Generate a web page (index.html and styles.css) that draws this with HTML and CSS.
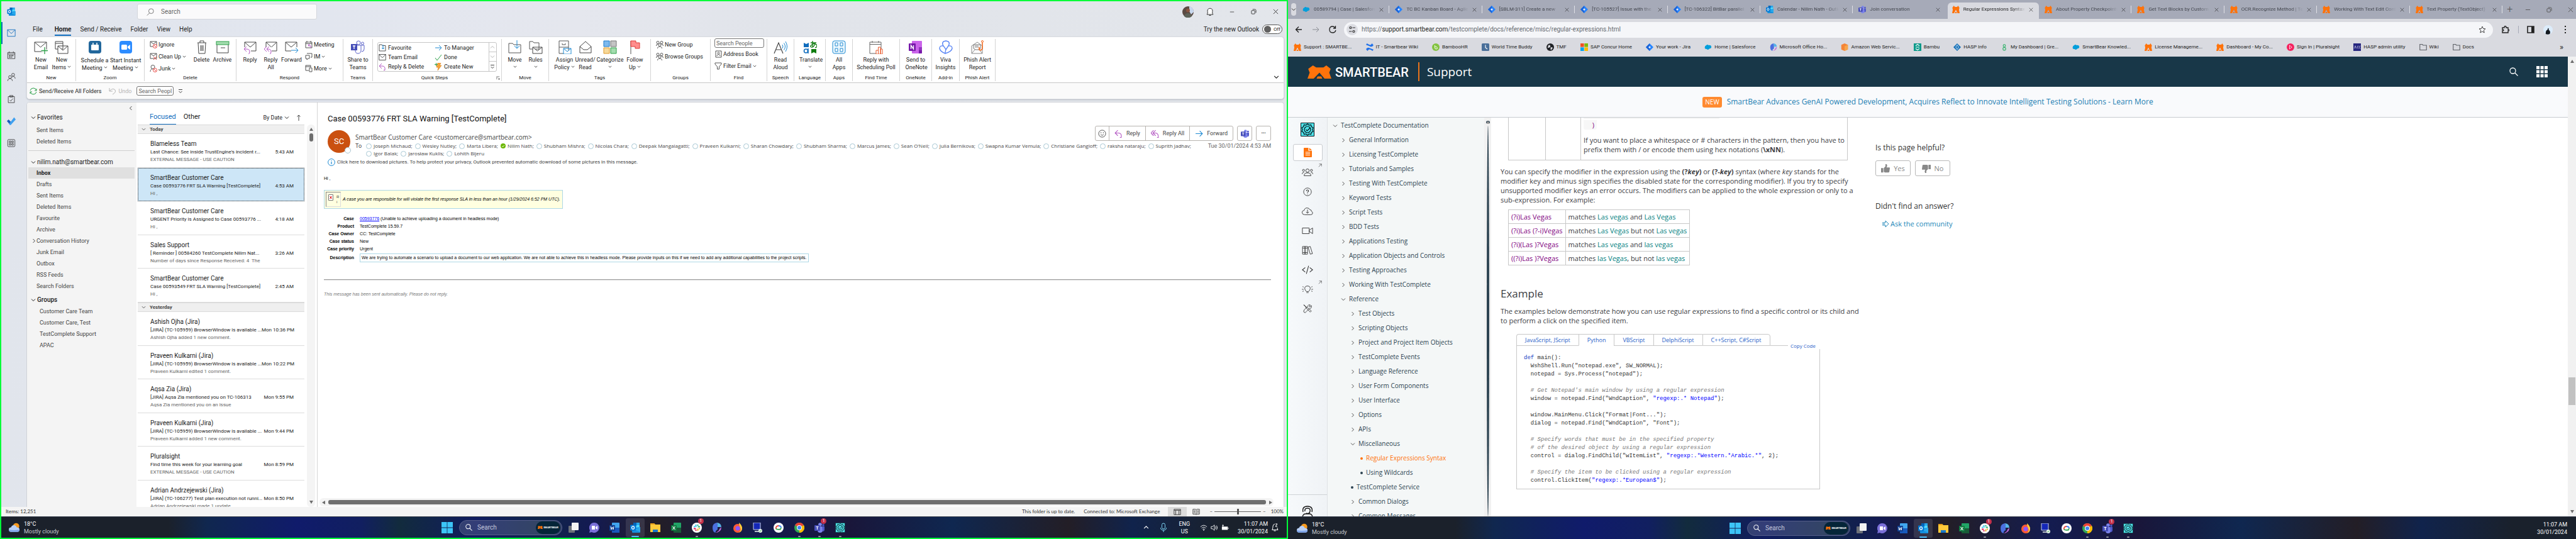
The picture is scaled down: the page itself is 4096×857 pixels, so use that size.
FILE: index.html
```html
<!DOCTYPE html>
<html lang="en">
<head>
<meta charset="utf-8">
<title>Desktop</title>
<link rel="stylesheet" href="styles.css">
</head>
<body>
<svg class="defs" aria-hidden="true">
  <symbol id="mail" viewBox="0 0 16 14"><path d="M1 1h14v12H1z M1 1l7 7 7-7" fill="none" stroke="currentColor"/></symbol>
  <symbol id="cal" viewBox="0 0 16 16"><path d="M1 3h14v12H1z M1 6h14 M4 1v3 M12 1v3" fill="none" stroke="currentColor"/><path d="M3.500 9h9.500M3.500 12h6.500" stroke="currentColor" stroke-width="2" stroke-dasharray="2 1"/></symbol>
  <symbol id="people" viewBox="0 0 16 16"><circle cx="5.500" cy="8" r="2.800" fill="none" stroke="currentColor"/><circle cx="11.500" cy="3.500" r="2.800" fill="none" stroke="currentColor"/><path d="M1 15.500c0-6 9-6 9 0M8.500 9c3-4 7-2 7 2" fill="none" stroke="currentColor"/></symbol>
  <symbol id="clip" viewBox="0 0 14 16"><path d="M1 3h12v12H1z M4 1h6v3H4z M4 10l2 2 4-5" fill="none" stroke="currentColor"/></symbol>
  <symbol id="todo" viewBox="0 0 16 14"><path d="M0 7l3-3 4 4-2 5z" fill="#185abd"/><path d="M4 12L13 0l3 4-9 10H5z" fill="#3fa0ef"/></symbol>
  <symbol id="apps" viewBox="0 0 16 16"><rect x="1" y="1" width="14" height="14" rx="2" fill="none" stroke="currentColor"/><path d="M4 4h3v3H4zM9 4h3v3H9zM4 9h3v3H4zM9 9h3v3H9z" fill="none" stroke="currentColor"/></symbol>
  <symbol id="outlook" viewBox="0 0 16 16"><path d="M5 0h10v8H5z" fill="#28a8ea"/><path d="M5 0h5v5H5z" fill="#0364b8"/><path d="M10 4h5v4h-5z" fill="#50d9ff"/><path d="M3 9l13-2v8q0 1-1 1H4q-1 0-1-1z" fill="#1490df"/><path d="M16 7v8l-9-4z" fill="#28a8ea"/><rect y="3.500" width="9" height="9" rx="1" fill="#0078d4"/><ellipse cx="4.500" cy="8" rx="2" ry="2.300" fill="none" stroke="#fff" stroke-width="1.300"/></symbol>
  <symbol id="lens" viewBox="0 0 14 14"><circle cx="8.500" cy="5.500" r="4.500" fill="none" stroke="currentColor"/><path d="M5.500 9L1 13.500" stroke="currentColor"/></symbol>
  <symbol id="lens2" viewBox="0 0 14 14"><circle cx="5.500" cy="5.500" r="4.500" fill="none" stroke="currentColor" stroke-width="1.300"/><path d="M9 9l4.500 4.500" stroke="currentColor" stroke-width="1.300"/></symbol>
  <symbol id="dn" viewBox="0 0 8 8"><path d="M1 2.500l3 3 3-3" fill="none" stroke="currentColor"/></symbol>
  <symbol id="rt" viewBox="0 0 8 8"><path d="M2.500 1l3 3-3 3" fill="none" stroke="currentColor"/></symbol>
  <symbol id="lt" viewBox="0 0 8 8"><path d="M5.500 1l-3 3 3 3" fill="none" stroke="currentColor"/></symbol>
  <symbol id="up" viewBox="0 0 8 8"><path d="M1 5.500l3-3 3 3" fill="none" stroke="currentColor"/></symbol>
  <symbol id="x" viewBox="0 0 10 10"><path d="M1 1l8 8M9 1l-8 8" stroke="currentColor" fill="none"/></symbol>
  <symbol id="min" viewBox="0 0 10 10"><path d="M1 5h8" stroke="currentColor"/></symbol>
  <symbol id="rest" viewBox="0 0 10 10"><rect x="1" y="3" width="6" height="6" rx="1" fill="none" stroke="currentColor"/><path d="M3 1h4q2 0 2 2v4" fill="none" stroke="currentColor"/></symbol>
  <symbol id="bell" viewBox="0 0 14 14"><path d="M2 11c2-2 1-4 1-6 0-5 8-5 8 0 0 2-1 4 1 6z" fill="#fff" stroke="currentColor"/><path d="M5.500 12.500h3" stroke="currentColor"/></symbol>
  <symbol id="newmail" viewBox="0 0 22 22"><path d="M1 3h19v15H1z M1 3l9.500 8L20 3" fill="#fff" stroke="#444"/><path d="M17 11v11M12 16.500h10" stroke="#fff" stroke-width="4"/><path d="M17 11v11M11.500 16.500h11" stroke="#2ea04a" stroke-width="1.300"/></symbol>
  <symbol id="items" viewBox="0 0 22 22"><path d="M1 2h12v12H1z M1 5h12" fill="#fff" stroke="#444"/><path d="M5 9h16v12H5z M5 9l8 7 8-7" fill="#fff" stroke="#444"/></symbol>
  <symbol id="zcal" viewBox="0 0 22 22"><rect x="1" y="1" width="20" height="20" rx="4" fill="#22679c"/><rect x="5" y="7" width="12" height="9" rx="1" fill="#fff"/><path d="M8 4v3M14 4v3" stroke="#fff" stroke-width="1.500"/></symbol>
  <symbol id="zcam" viewBox="0 0 22 22"><rect x="1" y="1" width="20" height="20" rx="4" fill="#2d8cff"/><rect x="4" y="7" width="9" height="8" rx="1.500" fill="#fff"/><path d="M14 10l4-3v8l-4-3z" fill="#fff"/></symbol>
  <symbol id="ignore" viewBox="0 0 12 12"><path d="M1 1h10v8H1z M1 1l5 4 5-4" fill="none" stroke="#555"/><circle cx="8.500" cy="8.500" r="3" fill="#fff" stroke="#e8413c"/><path d="M6.500 6.500l4 4" stroke="#e8413c"/></symbol>
  <symbol id="clean" viewBox="0 0 12 12"><path d="M1 1h10v8H1z M1 1l5 4 5-4" fill="none" stroke="#555"/><path d="M6 6l5 5M11 6l-5 5" stroke="#e8413c"/></symbol>
  <symbol id="junk" viewBox="0 0 12 12"><circle cx="5" cy="3.500" r="3" fill="none" stroke="#555"/><path d="M1 11c0-4 3-5 5-4" fill="none" stroke="#555"/><circle cx="8.500" cy="8.500" r="3" fill="#fff" stroke="#e8413c"/><path d="M6.500 6.500l4 4" stroke="#e8413c"/></symbol>
  <symbol id="trash" viewBox="0 0 22 22"><path d="M4 4h14M8 4V1h6v3M5 4l1 17h10l1-17M9 8v9M11 8v9M13 8v9" fill="none" stroke="#444"/></symbol>
  <symbol id="archive" viewBox="0 0 22 22"><path d="M2 6h18v14H2z" fill="#fff" stroke="#444"/><rect x="1" y="2" width="20" height="5" fill="#a3dcae" stroke="#2ea04a"/><path d="M8 12h7" stroke="#444"/></symbol>
  <symbol id="breply" viewBox="0 0 22 22"><path d="M2 3h18v14H2z M2 3l9 8 9-8" fill="#fff" stroke="#444"/><path d="M0 11h12v11H0z" fill="#fff"/><path d="M5 10l-4 4 4 4M1 14h4q5 0 5 4t-2 4" fill="none" stroke="#b254c2"/></symbol>
  <symbol id="breplyall" viewBox="0 0 22 22"><path d="M3 3h17v14H3z M3 3l8.500 8L20 3" fill="#fff" stroke="#444"/><path d="M0 11h12v11H0z" fill="#fff"/><path d="M4 10l-4 4 4 4M8 10l-4 4 4 4M4 14h2q5 0 5 4t-2 4" fill="none" stroke="#b254c2"/></symbol>
  <symbol id="bfwd" viewBox="0 0 22 22"><path d="M1 3h18v14H1z M1 3l9 8 9-8" fill="#fff" stroke="#444"/><path d="M10 11h12v11H10z" fill="#fff"/><path d="M10 16h11M17 12l4 4-4 4" fill="none" stroke="#1f8ad2"/></symbol>
  <symbol id="meet" viewBox="0 0 12 12"><path d="M1 2h10v9H1z M1 4.500h10M3 0v3M9 0v3" fill="none" stroke="#555"/><path d="M7 5L5 7l2 2M5 7h2q3 0 2 4" fill="none" stroke="#b254c2"/></symbol>
  <symbol id="im" viewBox="0 0 12 12"><path d="M3 1h8v6H9M1 4h6v5H5l-2 2V9H1z" fill="none" stroke="#555"/></symbol>
  <symbol id="more" viewBox="0 0 12 12"><path d="M1 1h8v3M1 3h8M1 1v8h5M7 5h4v6H7z" fill="none" stroke="#555"/></symbol>
  <symbol id="teams" viewBox="0 0 22 22"><circle cx="12" cy="4" r="3" fill="#fff" stroke="#5b62c8"/><circle cx="18.500" cy="5" r="2" fill="#fff" stroke="#5b62c8"/><path d="M8 8h8v8q0 5-5 5-4 0-4-5zM16 8h5v6q0 4-4 4" fill="#fff" stroke="#5b62c8"/><rect x="0" y="6" width="10" height="10" fill="#464eb8"/><path d="M3 9h4M5 9v5" stroke="#fff" stroke-width="1.300"/></symbol>
  <symbol id="teamsf" viewBox="0 0 16 16"><circle cx="9" cy="3" r="2.800" fill="#7b83eb"/><circle cx="14" cy="4" r="1.800" fill="#5059c9"/><path d="M5 6h8v6q0 4-4 4t-4-4z" fill="#7b83eb"/><path d="M12 6h4v5q0 3-3 3z" fill="#5059c9"/><rect y="4" width="9" height="9" rx="1" fill="#464eb8"/><path d="M2.500 6.500h4M4.500 6.500v4.500" stroke="#fff" stroke-width="1.200"/></symbol>
  <symbol id="fav" viewBox="0 0 12 12"><path d="M1 1h4l1 1.500h5V11H1z" fill="none" stroke="#555"/><path d="M7 1v7M5 6l2 2 2-2" fill="none" stroke="#1f8ad2"/></symbol>
  <symbol id="reply" viewBox="0 0 12 12"><path d="M5 1L1 5l4 4M1 5h5q5 0 4 6.500H8" fill="none" stroke="#b254c2"/></symbol>
  <symbol id="replyall" viewBox="0 0 12 12"><path d="M4 1L0 5l4 4M7 1L3 5l4 4M3 5h4q4 0 4 6.500H9" fill="none" stroke="#b254c2"/></symbol>
  <symbol id="arrow" viewBox="0 0 12 12"><path d="M1 6h10M7 2l4 4-4 4" fill="none" stroke="currentColor"/></symbol>
  <symbol id="check" viewBox="0 0 12 12"><path d="M1 7l3 4 7-9" fill="none" stroke="#2ea04a"/></symbol>
  <symbol id="bolt" viewBox="0 0 12 12"><path d="M5 0h5L8 4h3l-6 8 1-5H3z" fill="#f7a63a" stroke="#d9831f" stroke-width=".7"/><path d="M2.500 0v5M0 2.500h5" stroke="#2ea04a"/></symbol>
  <symbol id="move" viewBox="0 0 22 22"><path d="M1 5h6l2 2h11v13H1z" fill="#fff" stroke="#555"/><path d="M14 0v13M10 9l4 4 4-4" fill="none" stroke="#1f8ad2"/></symbol>
  <symbol id="rules" viewBox="0 0 22 22"><path d="M1 2h5l2 2h8v10H1z" fill="#fff" stroke="#555"/><path d="M6 11h15v10H6z M6 11l7.500 6 7.500-6" fill="#fff" stroke="#444"/></symbol>
  <symbol id="assign" viewBox="0 0 22 22"><path d="M2 1h15v20H2z M2 11h15M7 5v2h5V5" fill="#fff" stroke="#555"/><path d="M9 13h12v9H9z M9 13l6 5 6-5" fill="#fff" stroke="#1f8ad2"/></symbol>
  <symbol id="unread" viewBox="0 0 22 22"><path d="M2 10l9-8 9 8v10H2z M2 10l6 5h6l6-5" fill="#fff" stroke="#444"/></symbol>
  <symbol id="categ" viewBox="0 0 22 22"><path d="M1 1h9v9H1z" fill="#7db9ee" stroke="#1f78c8"/><path d="M12 1h9v9h-9z" fill="#c4c4c4" stroke="#777"/><path d="M1 12h9v9H1z" fill="#f7d99a" stroke="#e09a2b"/><path d="M12 12h9v9h-9z" fill="#a3dcae" stroke="#2ea04a"/></symbol>
  <symbol id="flag" viewBox="0 0 22 22"><path d="M4 1v21" stroke="#555"/><path d="M4 1h8v3h6v9h-7v-3H4z" fill="#ff8d8d" stroke="#dd3c38"/></symbol>
  <symbol id="grp" viewBox="0 0 12 12"><circle cx="3" cy="2.500" r="2" fill="none" stroke="#555"/><circle cx="9" cy="2.500" r="2" fill="none" stroke="#555"/><circle cx="6" cy="6.500" r="2" fill="none" stroke="#555"/><path d="M2.500 12c0-4 7-4 7 0M.500 8q0-3 3-3M11.500 8q0-3-3-3" fill="none" stroke="#555"/></symbol>
  <symbol id="abook" viewBox="0 0 12 12"><path d="M2 1h9v10H2z" fill="none" stroke="#555"/><circle cx="6.500" cy="4.500" r="1.500" fill="none" stroke="#555"/><path d="M4 9c0-3 5-3 5 0" fill="none" stroke="#555"/></symbol>
  <symbol id="filter" viewBox="0 0 12 12"><path d="M1 1h10v2L7.500 7v4h-3V7L1 3z" fill="none" stroke="#555"/></symbol>
  <symbol id="read" viewBox="0 0 22 22"><path d="M1 21L8 4l7 17M3.500 15h9" fill="none" stroke="#444" stroke-width="1.200"/><path d="M14 7q2 3 0 6M16.500 4.500q4 5.500 0 11M19 2q5 8 0 16" fill="none" stroke="#1f8ad2"/></symbol>
  <symbol id="trans" viewBox="0 0 22 22"><path d="M1 4l4 2 4-2v7H1z" fill="#0f6cbd"/><circle cx="4.500" cy="17" r="3" fill="none" stroke="#0f6cbd" stroke-width="1.600"/><path d="M8 13v8" stroke="#0f6cbd" stroke-width="1.600"/><path d="M12 4h9M15 1v9M19 6q-3 6-6 5t1-4 7 0-2 5" fill="none" stroke="#107c10" stroke-width="1.300"/><path d="M13 14h8v7l-4-2-4 2z" fill="#107c10"/></symbol>
  <symbol id="allapps" viewBox="0 0 22 22"><rect x="1" y="1" width="20" height="20" rx="3" fill="#eaf6fd" stroke="#1f8ad2"/><path d="M5 4h4v5H5zM13 4h4v5h-4zM5 13h4v5H5zM13 13h4v5h-4z" fill="#fff" stroke="#1f8ad2"/></symbol>
  <symbol id="poll" viewBox="0 0 22 22"><path d="M1 3h18v18H1z M1 6.500h18M5 1v3M15 1v3" fill="#fff" stroke="#666"/><path d="M11 16h3.500v6H11zM14.500 11H18v11h-3.500zM18 14h3v8h-3z" fill="#fff" stroke="#e8582b"/></symbol>
  <symbol id="onenote" viewBox="0 0 22 22"><rect x="5" y="1" width="16" height="20" rx="1" fill="#ca64ea"/><path d="M16 11h5v5h-5z" fill="#9332bf"/><path d="M16 16h5v4q0 1-1 1h-4z" fill="#7719aa"/><rect y="5" width="11" height="12" rx="1" fill="#7719aa"/><path d="M3.500 14V8l4 6V8" fill="none" stroke="#fff" stroke-width="1.400"/></symbol>
  <symbol id="viva" viewBox="0 0 22 22"><path d="M7 9Q3 2 11 1q8 1 4 8l-4 6q-2-4-4-6zM7 9q-6-1-6 4 1 5 9 8M15 9q6-1 6 4-1 5-11 8 0-4 1-6" fill="none" stroke="#5a86f5" stroke-width="1.400"/></symbol>
  <symbol id="phish" viewBox="0 0 22 22"><path d="M2 9l9-6 8 6v12H2z M2 21l6-7h5l6 7" fill="#fff" stroke="#888"/><path d="M5 7h11v6l-3 2H8l-3-2z" fill="#fff" stroke="#777"/><path d="M7 9h6M7 11h6" stroke="#888"/><path d="M19 4v9q-1 4-5 2v-4" fill="none" stroke="#f26b21" stroke-width="1.600"/><circle cx="19" cy="2" r="1.500" fill="none" stroke="#f26b21"/></symbol>
  <symbol id="sync" viewBox="0 0 12 12"><path d="M1 5q1-4 5-4t5 4M11 2v3H8M11 7q-1 4-5 4T1 7M1 10V7h3" fill="none" stroke="#2ea04a"/></symbol>
  <symbol id="undo" viewBox="0 0 12 12"><path d="M1 1v5h5M1 6q5-6 9-2 2 4-4 7" fill="none" stroke="#b5b5b5"/></symbol>
  <symbol id="over" viewBox="0 0 8 8"><path d="M1 1.500h6M1.500 4L4 6.500 6.500 4" fill="none" stroke="#444"/></symbol>
  <symbol id="launch" viewBox="0 0 8 8"><path d="M1 7V1h6M3 3l4 4M7 4v3H4" fill="none" stroke="#444" stroke-width=".8"/></symbol>
  <symbol id="smile" viewBox="0 0 14 14"><circle cx="7" cy="7" r="6" fill="none" stroke="#444"/><path d="M4.500 8.500q2.500 3 5 0" fill="none" stroke="#444"/><circle cx="5" cy="5.500" r=".8" fill="#444"/><circle cx="9" cy="5.500" r=".8" fill="#444"/></symbol>
  <symbol id="info" viewBox="0 0 12 12"><circle cx="6" cy="6" r="5.400" fill="none" stroke="#1f8ad2"/><path d="M6 5v4M6 3v1" stroke="#1f8ad2" stroke-width="1.200"/></symbol>
  <symbol id="okdot" viewBox="0 0 8 8"><circle cx="4" cy="4" r="4" fill="#6bb700"/><path d="M2 4l1.500 1.500L6 3" fill="none" stroke="#fff"/></symbol>
  <symbol id="bear" viewBox="0 0 66 107" preserveAspectRatio="none"><path d="M2 28L15 0l9 17h20L52 0l12 28-4 30 6 49H47L33 58 17 107H0l6-49z" fill="#ff730b"/><path d="M28 89h10l3 18H25z" fill="#ff730b"/></symbol>
  <symbol id="sf" viewBox="0 0 16 12"><path d="M4 2q3-3 5 0 5-1 6 3 0 4-4 4-3 4-6 1Q0 10 1 6q0-3 3-4z" fill="#009edb"/></symbol>
  <symbol id="jira" viewBox="0 0 16 16"><path d="M8 0l8 8-8 8-8-8z" fill="#2684ff"/><path d="M8 0v5L5 8l3 3v5L0 8z" fill="#1b63d6"/><path d="M8 5.500L10.500 8 8 10.500 5.500 8z" fill="#e8edf7"/></symbol>
  <symbol id="conf" viewBox="0 0 16 16"><path d="M0 12q4-5 8-2l8 3-2 3q-6-4-8-3l-3 3zM16 4q-4 5-8 2L0 3l2-3q6 4 8 3l3-3z" fill="#2071ea"/></symbol>
  <symbol id="bamboo" viewBox="0 0 16 16"><circle cx="8" cy="8" r="8" fill="#83c341"/><path d="M6 4v5q0 3 3 3t2-3-4-2" fill="none" stroke="#fff" stroke-width="1.300"/></symbol>
  <symbol id="wtb" viewBox="0 0 16 16"><rect width="16" height="16" rx="2" fill="#4a6f99"/><path d="M8 3v6l4 3" fill="none" stroke="#fff" stroke-width="1.500"/></symbol>
  <symbol id="globe" viewBox="0 0 16 16"><circle cx="8" cy="8" r="8" fill="#202226"/><path d="M4 4q3-2 4 1T5 9 3 8M9 8q5 0 4 2l-3 4q-2 0-1-6" fill="#d9dae0"/></symbol>
  <symbol id="ms" viewBox="0 0 16 16"><path d="M0 0h7.500v7.500H0z" fill="#f25022"/><path d="M8.500 0H16v7.500H8.500z" fill="#7fba00"/><path d="M0 8.500h7.500V16H0z" fill="#00a4ef"/><path d="M8.500 8.500H16V16H8.500z" fill="#ffb900"/></symbol>
  <symbol id="m365" viewBox="0 0 16 16"><path d="M8 0q-7 1-7 8t5 8q-1-3 3-5V4z" fill="#4b6fe0"/><path d="M8 0q7 1 7 7H9V4z" fill="#56b4e8"/><path d="M15 7q0 8-9 9 6-3 6-6z" fill="#c268d8"/></symbol>
  <symbol id="aws" viewBox="0 0 16 16"><path d="M8 0l7 3v10l-7 3-7-3V3z" fill="#f58536"/><path d="M8 16l7-3V3L8 6z" fill="#f7a64a"/></symbol>
  <symbol id="bambu" viewBox="0 0 16 16"><path d="M0 0h16v16H0z" fill="#0b9a8a"/><path d="M4 5l4-3 4 3M4 11l4 3 4-3M4 8h8" fill="none" stroke="#fff" stroke-width="1.500"/></symbol>
  <symbol id="hasp" viewBox="0 0 16 16"><path d="M8 0l8 8-8 8-8-8z" fill="#1571b8"/><path d="M8 3l3 5-3 5-3-5z" fill="none" stroke="#fff"/></symbol>
  <symbol id="green" viewBox="0 0 16 16"><circle cx="8" cy="5" r="2.500" fill="none" stroke="#3cb371" stroke-width="1.500"/><circle cx="8" cy="11.500" r="3" fill="none" stroke="#3cb371" stroke-width="1.500"/></symbol>
  <symbol id="plural" viewBox="0 0 16 16"><circle cx="8" cy="8" r="8" fill="#f5225f"/><path d="M6 4v8l5-4z" fill="none" stroke="#fff"/></symbol>
  <symbol id="acc" viewBox="0 0 16 16"><path d="M0 0h16v16H0z" fill="#26267f"/><path d="M2 11l2-6 2 6M11 5.500q-3 0-3 2.500t3 2.500M15 5.500q-3 0-3 2.500t3 2.500" fill="none" stroke="#c9cbe8"/></symbol>
  <symbol id="fold" viewBox="0 0 16 16"><path d="M1 2h5l2 2h7v10H1z" fill="none" stroke="#5f6368" stroke-width="1.500"/></symbol>
  <symbol id="back" viewBox="0 0 12 12"><path d="M11 6H1.500M6 1.500L1.500 6 6 10.500" fill="none" stroke="currentColor" stroke-width="1.300"/></symbol>
  <symbol id="reload" viewBox="0 0 12 12"><path d="M10 3Q8 1 6 1 1 1 1 6t5 5q4 0 5-4M10.500 0v4H7" fill="none" stroke="currentColor" stroke-width="1.300"/></symbol>
  <symbol id="tune" viewBox="0 0 12 12"><circle cx="3.500" cy="3" r="1.500" fill="none" stroke="#333" stroke-width="1.200"/><circle cx="8.500" cy="9" r="1.500" fill="none" stroke="#333" stroke-width="1.200"/><path d="M6.500 3H11M1 9h4.500" stroke="#333" stroke-width="1.200"/></symbol>
  <symbol id="star" viewBox="0 0 12 12"><path d="M6 1l1.500 3.500 3.500.300-2.700 2.400.9 3.800L6 9l-3.200 2 .9-3.800L1 4.800l3.500-.300z" fill="none" stroke="#444"/></symbol>
  <symbol id="ext" viewBox="0 0 12 12"><path d="M1 3h3q0-2.500 1.500-2.500T7 3h3v3q2 0 2 1t-2 1v3H1V8q2 0 2-1T1 6z" fill="none" stroke="#222" stroke-width="1.400"/></symbol>
  <symbol id="panel" viewBox="0 0 12 12"><path d="M1 1h10v10H1z" fill="none" stroke="#222" stroke-width="1.600"/><path d="M7 1h4v10H7z" fill="#222"/></symbol>
  <symbol id="dots" viewBox="0 0 12 12"><path d="M5 0h2v2H5zM5 5h2v2H5zM5 10h2v2H5z" fill="#222"/></symbol>
  <symbol id="grid9" viewBox="0 0 18 18"><path d="M0 0h5v5H0zM6.500 0h5v5h-5zM13 0h5v5h-5zM0 6.500h5v5H0zM6.500 6.500h5v5h-5zM13 6.500h5v5h-5zM0 13h5v5H0zM6.500 13h5v5h-5zM13 13h5v5h-5z" fill="#fff"/></symbol>
  <symbol id="tc" viewBox="0 0 22 22"><path d="M.500.500h21v21H.500z" fill="#4fe3ea" stroke="#06121a"/><path d="M11 2l2.500 2 3-.500.800 3 2.700 1.500-1 3 1 3-2.700 1.500-.800 3-3-.500L11 20l-2.500-2-3 .500-.800-3L2 14l1-3-1-3 2.700-1.500.800-3 3 .500z" fill="none" stroke="#06121a" stroke-width="1.200"/><circle cx="11" cy="11" r="5" fill="none" stroke="#06121a" stroke-width="1.200"/><path d="M8.500 11l2 2 4.500-4.500" fill="none" stroke="#06121a" stroke-width="1.200"/></symbol>
  <symbol id="doc" viewBox="0 0 14 16"><path d="M0 1q0-1 1-1h7v5h6v10q0 1-1 1H1q-1 0-1-1z" fill="#ff730b"/><path d="M9.500 0L14 4H9.500z" fill="#ff730b"/><path d="M3 7.500h8M3 10h8M3 12.500h8" stroke="#fff"/></symbol>
  <symbol id="community" viewBox="0 0 20 14"><circle cx="10" cy="4" r="3" fill="none" stroke="currentColor"/><circle cx="3" cy="3.500" r="1.800" fill="none" stroke="currentColor"/><circle cx="17" cy="3.500" r="1.800" fill="none" stroke="currentColor"/><path d="M4 13q0-5 6-5t6 5zM.500 10q0-3 3.500-3M19.500 10q0-3-3.500-3" fill="none" stroke="currentColor"/></symbol>
  <symbol id="help" viewBox="0 0 16 16"><circle cx="8" cy="8" r="7" fill="none" stroke="currentColor"/><path d="M6 6.500q0-2 2-2t2 2q0 1-2 2v1M8 11v1.200" fill="none" stroke="currentColor" stroke-width="1.200"/></symbol>
  <symbol id="cloud" viewBox="0 0 20 14"><path d="M5 13q-4 0-4.500-3.500T4 5.500Q5 1 9 1t5 3q3 0 3 3 2.500 1 2 3.500T16 13z" fill="none" stroke="currentColor"/><path d="M10 4v6M7.500 8l2.500 2.500L12.500 8" fill="none" stroke="currentColor"/></symbol>
  <symbol id="video" viewBox="0 0 20 14"><path d="M1 2h12v10H1zM13 6l6-4v10l-6-4z" fill="none" stroke="currentColor"/></symbol>
  <symbol id="books" viewBox="0 0 20 16"><path d="M1 1h4.500v14H1zM5.500 1H10v14H5.500zM1 4h9M1 12h9M11 2l4-1 4 13-4 1z" fill="none" stroke="currentColor"/></symbol>
  <symbol id="code" viewBox="0 0 20 14"><path d="M6 3L1 7l5 4M14 3l5 4-5 4M12 0L8 14" fill="none" stroke="currentColor" stroke-width="1.200"/></symbol>
  <symbol id="bulb" viewBox="0 0 20 16"><path d="M8 12Q5 9 5 6.500 5 2 10 2t5 4.500Q15 9 12 12zM8 14h4M1 3l2 1M0 8h3M1 12l2-1M19 3l-2 1M20 8h-3M19 12l-2-1" fill="none" stroke="currentColor"/></symbol>
  <symbol id="tools" viewBox="0 0 18 16"><path d="M2 1l4 3v2l8 8 2-2-8-7H6L3 1zM16 2l-3 3-1-1 2-3q-4-1-5 3L3 10q-2 3 0 4.500T7 13l5-5q5 0 4-6z" fill="none" stroke="currentColor"/></symbol>
  <symbol id="ne" viewBox="0 0 8 8"><path d="M1 7l6-6M2 1h5v5" fill="none" stroke="currentColor" stroke-width=".8"/></symbol>
  <symbol id="agent" viewBox="0 0 18 18"><path d="M2 10q-2-9 7-9t7 9M5 9q-1-5 4-5t4 5-6 3M1 18q1-5 5-5h6q4 0 5 5" fill="none" stroke="#111" stroke-width="1.400"/></symbol>
  <symbol id="thumb" viewBox="0 0 16 16"><path d="M0 7h4v8H0zM5 7l3-3V0h2q2 2 0 6h5q1 0 1 1l-1 7q0 1-2 1H7l-2-1z" fill="#888"/></symbol>
  <symbol id="cont" viewBox="0 0 12 12"><path d="M1 4h5V1l5 5-5 5V8H1M1 6h4" fill="none" stroke="#2387b8"/></symbol>
  <symbol id="weather" viewBox="0 0 20 16"><circle cx="13" cy="6" r="5.500" fill="#f79a1e"/><path d="M4 16q-4 0-4-4t4-4q1-4 5-4t5 4q5 0 5 4t-4 4z" fill="#b8cff5"/><path d="M4 16q-4 0-4-4 8 2 19 0 0 4-4 4z" fill="#7fa4ea"/></symbol>
  <symbol id="win" viewBox="0 0 18 18"><path d="M0 0h8.600v8.600H0zM9.400 0H18v8.600H9.400zM0 9.400h8.600V18H0zM9.400 9.400H18V18H9.400z" fill="#3cc4f7"/></symbol>
  <symbol id="tview" viewBox="0 0 16 16"><rect x="0" y="5" width="10" height="11" rx="1" fill="#6c7078"/><rect x="5" y="0" width="11" height="12" rx="1" fill="#f3f3f3"/></symbol>
  <symbol id="chat" viewBox="0 0 16 16"><path d="M8 0a8 8 0 1 1-4 15l-4 1 1-4A8 8 0 0 1 8 0z" fill="#7a6fd8"/><path d="M4 5h5v6H4zM10 7l3-2v6l-3-2z" fill="#fff"/></symbol>
  <symbol id="word" viewBox="0 0 16 16"><rect x="4" width="12" height="16" rx="1" fill="#41a5ee"/><path d="M4 8h12v7q0 1-1 1H4z" fill="#185abd"/><rect y="4" width="9" height="9" rx="1" fill="#103f91"/><path d="M2 6l1 5 1.500-4L6 11l1-5" fill="none" stroke="#fff"/></symbol>
  <symbol id="excel" viewBox="0 0 16 16"><rect x="4" width="12" height="16" rx="1" fill="#21a366"/><path d="M4 8h12v7q0 1-1 1H4z" fill="#185c37"/><rect y="4" width="9" height="9" rx="1" fill="#107c41"/><path d="M2.500 6l4 5M6.500 6l-4 5" stroke="#fff" stroke-width="1.200"/></symbol>
  <symbol id="files" viewBox="0 0 16 16"><path d="M0 1h6l2 2h8v12H0z" fill="#ffca3a"/><path d="M0 1h6l2 2H0z" fill="#e59c17"/><path d="M4 11h8v4H4z" fill="#1979ca"/></symbol>
  <symbol id="slack" viewBox="0 0 16 16"><circle cx="8" cy="8" r="8" fill="#fff"/><path d="M6.500 3v4M3 6.500h2" stroke="#36c5f0" stroke-width="2"/><path d="M13 6.500H9.500M9.500 3v2" stroke="#2eb67d" stroke-width="2"/><path d="M9.500 13V9.500M11 9.500h2" stroke="#ecb22e" stroke-width="2"/><path d="M3 9.500h3.500M6.500 11v2" stroke="#e01e5a" stroke-width="2"/></symbol>
  <symbol id="ff" viewBox="0 0 16 16"><circle cx="8" cy="9" r="7" fill="#ff5a36"/><circle cx="8" cy="9" r="3.500" fill="#9059ff"/><path d="M10 0q5 4 5 9 0 5-5 7 4-4 2-8T10 0z" fill="#ffcf3a"/></symbol>
  <symbol id="pc" viewBox="0 0 16 16"><path d="M1 0h11v11H1z" fill="#1427b8" stroke="#c9d2e8"/><path d="M3 13h8v2H3z" fill="#b7bec9"/><circle cx="12" cy="13" r="3" fill="#e8f4e8"/><path d="M10.500 13l1 1 2-2" fill="none" stroke="#2ea04a"/></symbol>
  <symbol id="gcp" viewBox="0 0 16 16"><circle cx="8" cy="8" r="8" fill="#fff"/><path d="M4 10q-1-5 4-5" fill="none" stroke="#ea4335" stroke-width="1.800"/><path d="M8 5q4 0 4 3" fill="none" stroke="#4285f4" stroke-width="1.800"/><path d="M4 9.500q1 2 7 1l1-2.500" fill="none" stroke="#34a853" stroke-width="1.800"/></symbol>
  <symbol id="chrome" viewBox="0 0 16 16"><circle cx="8" cy="8" r="8" fill="#34a853"/><path d="M8 8L1 4a8 8 0 0 1 14 0z" fill="#ea4335"/><path d="M8 8l7-4a8 8 0 0 1-7 12z" fill="#fbbc05"/><circle cx="8" cy="8" r="4" fill="#fff"/><circle cx="8" cy="8" r="3" fill="#4285f4"/></symbol>
  <symbol id="mic" viewBox="0 0 12 16"><rect x="3.500" y="1" width="5" height="9" rx="2.500" fill="none" stroke="#7fd6f5"/><path d="M1.500 8q0 4 4.500 4t4.500-4M6 12v3" fill="none" stroke="#7fd6f5"/></symbol>
  <symbol id="wifi" viewBox="0 0 14 12"><path d="M1 4.500q6-6 12 0M3 7q4-4 8 0M5 9q2-2 4 0" fill="none" stroke="#fff"/><circle cx="7" cy="10.500" r="1" fill="#fff"/></symbol>
  <symbol id="vol" viewBox="0 0 14 12"><path d="M1 4h2.500L7 1v10L3.500 8H1zM9 3.500q2 2.500 0 5M11 2q3 4 0 8" fill="none" stroke="#fff"/></symbol>
  <symbol id="batt" viewBox="0 0 14 12"><path d="M1 4h11v6H1z" fill="#fff"/><path d="M12.500 6h1v2h-1z" fill="#fff"/><path d="M3 0v5M1.500 2h3" stroke="#fff"/></symbol>
  <symbol id="layout" viewBox="0 0 14 12"><path d="M1 1h12v10H1zM1 3h12M4 3v8M10 3v8" fill="none" stroke="#333"/></symbol>
  <symbol id="book" viewBox="0 0 14 12"><path d="M1 1h5l1 1 1-1h5v9H8l-1 1-1-1H1zM7 2v9M2.500 3.500H5M2.500 5.500H5M2.500 7.500H5M9 3.500h2.500M9 5.500h2.500M9 7.500h2.500" fill="none" stroke="#333"/></symbol>
</svg>

<div class="screens">
<section class="screen mailscreen">
  <div class="outlook">
    <nav class="rail">
      <span class="logo"><svg><use href="#outlook"/></svg></span>
      <a href="#" class="on"><svg><use href="#mail"/></svg></a>
      <a href="#"><svg><use href="#cal"/></svg></a>
      <a href="#"><svg><use href="#people"/></svg></a>
      <a href="#"><svg><use href="#clip"/></svg></a>
      <a href="#"><svg><use href="#todo"/></svg></a>
      <a href="#"><svg><use href="#apps"/></svg></a>
    </nav>
    <div class="omain">
      <header class="otitle">
        <label class="osearch"><svg><use href="#lens"/></svg><input type="search" placeholder="Search"></label>
        <div class="winbtns">
          <button><svg class="face" viewBox="0 0 18 18"><circle cx="9" cy="9" r="9" fill="#5b4a43"/><path d="M11 0a9 9 0 0 1 7 9l-4 4-3-5z" fill="#c8d8ee"/><circle cx="9" cy="6.500" r="3" fill="#8a5540"/><path d="M3 16q1-5 6-5t6 5a9 9 0 0 1-12 0z" fill="#5d6258"/></svg></button>
          <button><svg class="i14"><use href="#bell"/></svg></button>
          <button><svg class="i8"><use href="#min"/></svg></button>
          <button><svg class="i9"><use href="#rest"/></svg></button>
          <button><svg class="i9"><use href="#x"/></svg></button>
        </div>
      </header>
      <div class="otabs">
        <a href="#" class="file">File</a><a href="#" class="on">Home</a><a href="#">Send / Receive</a><a href="#">Folder</a><a href="#">View</a><a href="#">Help</a>
        <label class="try">Try the new Outlook <input type="checkbox"><span class="toggle"><i></i>Off</span></label>
      </div>
      <div class="ribboncard">
        <div class="ribbon">
          <div class="g"><div class="c"><button class="b"><svg><use href="#newmail"/></svg>New<br>Email</button><button class="b"><svg><use href="#items"/></svg>New<br>Items <svg class="v"><use href="#dn"/></svg></button></div><h6>New</h6></div>
          <div class="g"><div class="c zoomg"><button class="b"><svg><use href="#zcal"/></svg>Schedule a<br>Meeting <svg class="v"><use href="#dn"/></svg></button><button class="b"><svg><use href="#zcam"/></svg>Start Instant<br>Meeting <svg class="v"><use href="#dn"/></svg></button></div><h6>Zoom</h6></div>
          <div class="g"><div class="c"><div class="s"><button><svg><use href="#ignore"/></svg>Ignore</button><button><svg><use href="#clean"/></svg>Clean Up <svg class="v"><use href="#dn"/></svg></button><button><svg><use href="#junk"/></svg>Junk <svg class="v"><use href="#dn"/></svg></button></div><button class="b"><svg><use href="#trash"/></svg>Delete</button><button class="b"><svg><use href="#archive"/></svg>Archive</button></div><h6>Delete</h6></div>
          <div class="g"><div class="c"><button class="b"><svg><use href="#breply"/></svg>Reply</button><button class="b"><svg><use href="#breplyall"/></svg>Reply<br>All</button><button class="b"><svg><use href="#bfwd"/></svg>Forward</button><div class="s"><button><svg><use href="#meet"/></svg>Meeting</button><button><svg><use href="#im"/></svg>IM <svg class="v"><use href="#dn"/></svg></button><button><svg><use href="#more"/></svg>More <svg class="v"><use href="#dn"/></svg></button></div></div><h6>Respond</h6></div>
          <div class="g"><div class="c"><button class="b"><svg><use href="#teams"/></svg>Share to<br>Teams</button></div><h6>Teams</h6></div>
          <div class="g"><div class="c"><div class="gallery">
            <button><svg><use href="#fav"/></svg>Favourite</button><button><svg class="blue"><use href="#arrow"/></svg>To Manager</button><button class="sc dim"><svg><use href="#up"/></svg></button>
            <button><svg><use href="#mail"/></svg>Team Email</button><button><svg><use href="#check"/></svg>Done</button><button class="sc dim"><svg><use href="#dn"/></svg></button>
            <button><svg><use href="#reply"/></svg>Reply &amp; Delete</button><button><svg><use href="#bolt"/></svg>Create New</button><button class="sc"><svg><use href="#over"/></svg></button>
          </div></div><h6 class="lh"><span>Quick Steps</span><svg><use href="#launch"/></svg></h6></div>
          <div class="g"><div class="c"><button class="b"><svg><use href="#move"/></svg>Move<br><svg class="v"><use href="#dn"/></svg></button><button class="b"><svg><use href="#rules"/></svg>Rules<br><svg class="v"><use href="#dn"/></svg></button></div><h6>Move</h6></div>
          <div class="g"><div class="c"><button class="b"><svg><use href="#assign"/></svg>Assign<br>Policy <svg class="v"><use href="#dn"/></svg></button><button class="b"><svg><use href="#unread"/></svg>Unread/<br>Read</button><button class="b wide"><svg><use href="#categ"/></svg>Categorize<br><svg class="v"><use href="#dn"/></svg></button><button class="b"><svg><use href="#flag"/></svg>Follow<br>Up <svg class="v"><use href="#dn"/></svg></button></div><h6>Tags</h6></div>
          <div class="g"><div class="c"><div class="s"><button><svg><use href="#grp"/></svg>New Group</button><button><svg><use href="#grp"/></svg>Browse Groups</button></div></div><h6>Groups</h6></div>
          <div class="g"><div class="c"><div class="s"><input class="sp" placeholder="Search People"><button><svg><use href="#abook"/></svg>Address Book</button><button><svg><use href="#filter"/></svg>Filter Email <svg class="v"><use href="#dn"/></svg></button></div></div><h6>Find</h6></div>
          <div class="g"><div class="c"><button class="b"><svg><use href="#read"/></svg>Read<br>Aloud</button></div><h6>Speech</h6></div>
          <div class="g"><div class="c"><button class="b"><svg><use href="#trans"/></svg>Translate<br><svg class="v"><use href="#dn"/></svg></button></div><h6>Language</h6></div>
          <div class="g"><div class="c"><button class="b"><svg><use href="#allapps"/></svg>All<br>Apps</button></div><h6>Apps</h6></div>
          <div class="g"><div class="c"><button class="b"><svg><use href="#poll"/></svg>Reply with<br>Scheduling Poll</button></div><h6>Find Time</h6></div>
          <div class="g"><div class="c"><button class="b"><svg><use href="#onenote"/></svg>Send to<br>OneNote</button></div><h6>OneNote</h6></div>
          <div class="g"><div class="c"><button class="b"><svg><use href="#viva"/></svg>Viva<br>Insights</button></div><h6>Add-in</h6></div>
          <div class="g"><div class="c"><button class="b"><svg><use href="#phish"/></svg>Phish Alert<br>Report</button></div><h6>Phish Alert</h6></div>
          <button class="collapse"><svg class="i9"><use href="#dn"/></svg></button>
        </div>
        <div class="qat"><button><svg><use href="#sync"/></svg>Send/Receive All Folders</button><button class="dis" disabled><svg><use href="#undo"/></svg>Undo</button><input class="sp" placeholder="Search People"><button><svg class="i8"><use href="#over"/></svg></button></div>
      </div>
      <div class="opanel">
        <nav class="folders">
          <button class="fold"><svg class="i8"><use href="#lt"/></svg></button>
          <h5><svg><use href="#dn"/></svg>Favorites</h5>
          <a href="#">Sent Items</a><a href="#">Deleted Items</a>
          <hr>
          <h5 class="acct"><svg><use href="#dn"/></svg>nilim.nath@smartbear.com</h5>
          <a href="#" class="on">Inbox</a><a href="#">Drafts</a><a href="#">Sent Items</a><a href="#">Deleted Items</a><a href="#">Favourite</a><a href="#">Archive</a><a href="#" class="exp"><svg><use href="#rt"/></svg>Conversation History</a><a href="#">Junk Email</a><a href="#">Outbox</a><a href="#">RSS Feeds</a><a href="#">Search Folders</a>
          <h5 class="groups"><svg><use href="#dn"/></svg>Groups</h5>
          <a href="#" class="sub">Customer Care Team</a><a href="#" class="sub">Customer Care, Test</a><a href="#" class="sub">TestComplete Support</a><a href="#" class="sub">APAC</a>
        </nav>
        <div class="msgs">
          <div class="mtabs"><a href="#" class="on">Focused</a><a href="#">Other</a><button class="by">By Date <svg class="i8"><use href="#dn"/></svg></button><button class="asc"><svg viewBox="0 0 6 10"><path d="M3 10V1M.5 3.500L3 1l2.500 2.500" fill="none" stroke="#444"/></svg></button></div>
          <div class="mlist">
            <div class="mscroll">
            <h5><svg><use href="#dn"/></svg>Today</h5>
            <ul>
              <li><b>Blameless Team</b><p><span>Last Chance: See inside TrustEngine's incident r...</span><time>5:43 AM</time></p><em>EXTERNAL MESSAGE - USE CAUTION</em></li>
              <li class="sel"><b>SmartBear Customer Care</b><p><span>Case 00593776 FRT SLA Warning [TestComplete]</span><time>4:53 AM</time></p><em>Hi ,</em></li>
              <li><b>SmartBear Customer Care</b><p><span>URGENT Priority is Assigned to Case 00593776 ...</span><time>4:18 AM</time></p><em>Hi ,</em></li>
              <li><b>Sales Support</b><p><span>[ Reminder ] 00584260 TestComplete Nilim Nat...</span><time>3:26 AM</time></p><em>Number of days since Response Received: 4&nbsp; The</em></li>
              <li><b>SmartBear Customer Care</b><p><span>Case 00593549 FRT SLA Warning [TestComplete]</span><time>2:45 AM</time></p><em>Hi ,</em></li>
            </ul>
            <h5><svg><use href="#dn"/></svg>Yesterday</h5>
            <ul>
              <li><b>Ashish Ojha (Jira)</b><p><span>[JIRA] (TC-105959) BrowserWindow is available ...</span><time>Mon 10:36 PM</time></p><em>Ashish Ojha added 1 new comment.</em></li>
              <li><b>Praveen Kulkarni (Jira)</b><p><span>[JIRA] (TC-105959) BrowserWindow is available ...</span><time>Mon 10:22 PM</time></p><em>Praveen Kulkarni edited 1 comment.</em></li>
              <li><b>Aqsa Zia (Jira)</b><p><span>[JIRA] Aqsa Zia mentioned you on TC-106313</span><time>Mon 9:55 PM</time></p><em>Aqsa Zia mentioned you on an issue</em></li>
              <li><b>Praveen Kulkarni (Jira)</b><p><span>[JIRA] (TC-105959) BrowserWindow is available ...</span><time>Mon 9:44 PM</time></p><em>Praveen Kulkarni added 1 new comment.</em></li>
              <li><b>Pluralsight</b><p><span>Find time this week for your learning goal</span><time>Mon 8:59 PM</time></p><em>EXTERNAL MESSAGE - USE CAUTION</em></li>
              <li><b>Adrian Andrzejewski (Jira)</b><p><span>[JIRA] (TC-106277) Test plan execution not runni...</span><time>Mon 8:50 PM</time></p><em>Adrian Andrzejewski made 1 update.</em></li>
            </ul>
            </div>
            <div class="vbar"><i class="tri u"></i><i class="knob"></i><i class="tri d"></i></div>
          </div>
        </div>
        <article class="reading">
          <h1>Case 00593776 FRT SLA Warning [TestComplete]</h1>
          <div class="head">
            <div class="ava">SC<i></i></div>
            <div class="who">
              <div class="top">
                <div class="from">SmartBear Customer Care &lt;customercare@smartbear.com&gt;</div>
                <div class="row"><div class="seg"><button><svg><use href="#smile"/></svg></button><button><svg><use href="#reply"/></svg>Reply</button><button><svg><use href="#replyall"/></svg>Reply All</button><button><svg class="blue"><use href="#arrow"/></svg>Forward</button></div><button class="sq"><svg><use href="#teamsf"/></svg></button><button class="sq">•••</button></div>
              </div>
              <div class="to"><span>To</span><div class="names"><div><span>Joseph Michaud;</span><span>Wesley Nutley;</span><span>Marta Libera;</span><span class="me"><svg><use href="#okdot"/></svg>Nilim Nath;</span><span>Shubham Mishra;</span><span>Nicolas Chara;</span><span>Deepak Mangalagatti;</span><span>Praveen Kulkarni;</span><span>Sharan Chowdary;</span><span>Shubham Sharma;</span><span>Marcus James;</span><span>Sean O'Neil;</span><span>Julia Bernikova;</span><span>Swapna Kumar Vemula;</span><span>Christiane Gangloff;</span><span>raksha nataraju;</span><span>Suprith Jadhav;</span></div><div><span>Igor Balak;</span><span>Jarosław Kuklis;</span><span>Lohith Bijeru</span></div></div><time>Tue 30/01/2024 4:53 AM</time></div>
            </div>
          </div>
          <p class="infobar"><svg><use href="#info"/></svg>Click here to download pictures. To help protect your privacy, Outlook prevented automatic download of some pictures in this message.</p>
          <div class="body">
            <p>Hi ,</p>
            <div class="warn"><span class="broken"><svg viewBox="0 0 8 10"><path d="M.5.500h7v9h-7z" fill="#fff" stroke="#777"/><path d="M2.500 3l3 4M5.500 3l-3 4" stroke="#e00000"/></svg><small>R<br>i</small></span><em>A case you are responsible for will violate the first response SLA in less than an hour (1/29/2024 6:52 PM UTC).</em></div>
            <table>
              <tr><th>Case</th><td><a href="#">00593776</a> (Unable to achieve uploading a document in headless mode)</td></tr>
              <tr><th>Product</th><td>TestComplete 15.59.7</td></tr>
              <tr><th>Case Owner</th><td>CC: TestComplete</td></tr>
              <tr><th>Case status</th><td>New</td></tr>
              <tr><th>Case priority</th><td>Urgent</td></tr>
              <tr><th>Description</th><td class="desc"><span>We are trying to automate a scenario to upload a document to our web application. We are not able to achieve this in headless mode. Please provide inputs on this if we need to add any additional capabilities to the project scripts.</span></td></tr>
            </table>
            <hr>
            <p class="auto">This message has been sent automatically. Please do not reply.</p>
          </div>
          <div class="hbar"><i class="tri l"></i><i class="knob"></i><i class="tri r"></i></div>
        </article>
      </div>
    </div>
  </div>
  <footer class="status"><span class="cnt">Items: 12,251</span><span>This folder is up to date.</span><span>Connected to: Microsoft Exchange</span><button class="on"><svg><use href="#layout"/></svg></button><button><svg><use href="#book"/></svg></button><label class="zoom">–<input type="range" min="10" max="190" value="100">–</label><span class="pct">100%</span></footer>
  <div class="taskbar">
    <div class="wx"><svg><use href="#weather"/></svg><div><b>18°C</b><span>Mostly cloudy</span></div></div>
    <button class="start"><svg><use href="#win"/></svg></button>
    <label class="tsearch"><svg><use href="#lens2"/></svg><input placeholder="Search"><span class="pill"><svg><use href="#bear"/></svg>SMARTBEAR</span></label>
    <div class="tapps"><button><svg><use href="#tview"/></svg></button><button><svg><use href="#chat"/></svg></button><button><svg><use href="#word"/></svg></button><button class="act"><svg><use href="#outlook"/></svg></button><button><svg><use href="#files"/></svg></button><button><svg><use href="#excel"/></svg></button><button class="run"><svg><use href="#slack"/></svg><i class="badge">1</i></button><button><svg><use href="#m365"/></svg></button><button><svg><use href="#ff"/></svg></button><button><svg><use href="#pc"/></svg></button><button><svg><use href="#gcp"/></svg></button><button class="run"><svg><use href="#chrome"/></svg></button><button class="run"><svg><use href="#teamsf"/></svg><i class="badge">1</i></button><button class="run"><svg><use href="#tc"/></svg></button></div>
    <div class="tray"><svg class="i9"><use href="#up"/></svg><svg class="mic"><use href="#mic"/></svg><span class="lang">ENG<br>US</span><svg><use href="#wifi"/></svg><svg><use href="#vol"/></svg><svg><use href="#batt"/></svg><time>11:07 AM<br>30/01/2024</time><svg class="nb" viewBox="0 0 12 14"><path d="M2 10q1-2 1-5 0-3 3-4M10 7q0 2 1 3.500H1.500M4.500 12h3M7 1h3L7 5h3" fill="none" stroke="#fff"/></svg></div>
  </div>
</section>

<section class="screen webscreen">
  <div class="tabstrip">
    <button class="tsb"><svg class="i8"><use href="#dn"/></svg></button>
    <div class="tabs">
      <a href="#"><svg><use href="#sf"/></svg><span>00589794 | Case | Salesforce</span><svg class="cl"><use href="#x"/></svg></a>
      <a href="#"><svg><use href="#jira"/></svg><span>TC BC Kanban Board - Agile board</span><svg class="cl"><use href="#x"/></svg></a>
      <a href="#"><svg><use href="#jira"/></svg><span>[SBLM-311] Create a new</span><svg class="cl"><use href="#x"/></svg></a>
      <a href="#"><svg><use href="#jira"/></svg><span>[TC-105527] Issue with the</span><svg class="cl"><use href="#x"/></svg></a>
      <a href="#"><svg><use href="#jira"/></svg><span>[TC-106322] BitBar parallel</span><svg class="cl"><use href="#x"/></svg></a>
      <a href="#"><svg><use href="#outlook"/></svg><span>Calendar - Nilim Nath - Outlook</span><svg class="cl"><use href="#x"/></svg></a>
      <a href="#" class="pre"><svg><use href="#teamsf"/></svg><span>Join conversation</span><svg class="cl"><use href="#x"/></svg></a>
      <a href="#" class="on"><svg><use href="#bear"/></svg><span>Regular Expressions Syntax</span><svg class="cl"><use href="#x"/></svg></a>
      <a href="#"><svg><use href="#bear"/></svg><span>About Property Checkpoints</span><svg class="cl"><use href="#x"/></svg></a>
      <a href="#"><svg><use href="#bear"/></svg><span>Get Text Blocks by Custom</span><svg class="cl"><use href="#x"/></svg></a>
      <a href="#"><svg><use href="#bear"/></svg><span>OCR.Recognize Method | Test</span><svg class="cl"><use href="#x"/></svg></a>
      <a href="#"><svg><use href="#bear"/></svg><span>Working With Text Edit Controls</span><svg class="cl"><use href="#x"/></svg></a>
      <a href="#"><svg><use href="#bear"/></svg><span>Text Property (TextObject)</span><svg class="cl"><use href="#x"/></svg></a>
    </div>
    <div class="cwin"><button class="plus">+</button><button><svg class="i9"><use href="#min"/></svg></button><button><svg class="i9"><use href="#rest"/></svg></button><button><svg class="i9"><use href="#x"/></svg></button></div>
  </div>
  <div class="navbar">
    <button><svg><use href="#back"/></svg></button><button class="fwd"><svg><use href="#arrow"/></svg></button><button><svg><use href="#reload"/></svg></button>
    <div class="url"><span class="site"><svg><use href="#tune"/></svg></span><a href="#">https://<b>support.smartbear.com</b>/testcomplete/docs/reference/misc/regular-expressions.html</a><svg class="st"><use href="#star"/></svg></div>
    <svg><use href="#ext"/></svg><i class="sep"></i><svg><use href="#panel"/></svg><svg class="me" viewBox="0 0 16 16"><circle cx="8" cy="8" r="8" fill="#dcecfb"/><path d="M4 15q0-7 3-7l1-3q2 0 1 3 4 2 2 7a8 8 0 0 1-7 0z" fill="#14181f"/></svg><svg><use href="#dots"/></svg>
  </div>
  <div class="marks">
    <div class="mk">
    <a href="#"><svg><use href="#bear"/></svg>Support : SMARTBE...</a><a href="#"><svg><use href="#conf"/></svg>IT - Smartbear Wiki</a><a href="#"><svg><use href="#bamboo"/></svg>BambooHR</a><a href="#"><svg><use href="#wtb"/></svg>World Time Buddy</a><a href="#"><svg><use href="#globe"/></svg>TMF</a><a href="#"><svg><use href="#ms"/></svg>SAP Concur Home</a><a href="#"><svg><use href="#jira"/></svg>Your work - Jira</a><a href="#"><svg><use href="#sf"/></svg>Home | Salesforce</a><a href="#"><svg><use href="#m365"/></svg>Microsoft Office Ho...</a><a href="#"><svg><use href="#aws"/></svg>Amazon Web Servic...</a><a href="#"><svg><use href="#bambu"/></svg>Bambu</a><a href="#"><svg><use href="#hasp"/></svg>HASP Info</a><a href="#"><svg><use href="#green"/></svg>My Dashboard | Gre...</a><a href="#"><svg><use href="#sf"/></svg>SmartBear Knowled...</a><a href="#"><svg><use href="#bear"/></svg>License Manageme...</a><a href="#"><svg><use href="#bear"/></svg>Dashboard - My Co...</a><a href="#"><svg><use href="#plural"/></svg>Sign In | Pluralsight</a><a href="#"><svg><use href="#acc"/></svg>HASP admin utility</a><a href="#"><svg><use href="#fold"/></svg>Wiki</a><a href="#"><svg><use href="#fold"/></svg>Docs</a>
    </div>
    <span class="rr">»</span>
  </div>
  <div class="page">
    <div class="site-in">
      <header class="sb"><svg class="bear"><use href="#bear"/></svg><span class="wm">SMARTBEAR</span><span class="sup">Support</span><div class="right"><svg class="sl"><use href="#lens2"/></svg><svg class="g9"><use href="#grid9"/></svg></div></header>
      <div class="banner"><span class="new">NEW</span><a href="#">SmartBear Advances GenAI Powered Development, Acquires Reflect to Innovate Intelligent Testing Solutions - Learn More</a></div>
      <div class="cols">
        <nav class="irail">
          <svg class="tc"><use href="#tc"/></svg>
          <a href="#" class="on"><svg class="dc"><use href="#doc"/></svg></a>
          <a href="#"><svg><use href="#community"/></svg><svg class="ne"><use href="#ne"/></svg></a>
          <a href="#"><svg><use href="#help"/></svg></a>
          <a href="#"><svg><use href="#cloud"/></svg></a>
          <a href="#"><svg><use href="#video"/></svg></a>
          <a href="#"><svg><use href="#books"/></svg></a>
          <a href="#"><svg><use href="#code"/></svg></a>
          <a href="#"><svg><use href="#bulb"/></svg><svg class="ne"><use href="#ne"/></svg></a>
          <a href="#"><svg><use href="#tools"/></svg></a>
          <div class="agent"><svg><use href="#agent"/></svg></div>
        </nav>
        <nav class="tree">
          <ul>
            <li class="l0 o"><a href="#"><svg><use href="#dn"/></svg>TestComplete Documentation</a></li>
            <li class="l1"><a href="#"><svg><use href="#rt"/></svg>General Information</a></li>
            <li class="l1"><a href="#"><svg><use href="#rt"/></svg>Licensing TestComplete</a></li>
            <li class="l1"><a href="#"><svg><use href="#rt"/></svg>Tutorials and Samples</a></li>
            <li class="l1"><a href="#"><svg><use href="#rt"/></svg>Testing With TestComplete</a></li>
            <li class="l1"><a href="#"><svg><use href="#rt"/></svg>Keyword Tests</a></li>
            <li class="l1"><a href="#"><svg><use href="#rt"/></svg>Script Tests</a></li>
            <li class="l1"><a href="#"><svg><use href="#rt"/></svg>BDD Tests</a></li>
            <li class="l1"><a href="#"><svg><use href="#rt"/></svg>Applications Testing</a></li>
            <li class="l1"><a href="#"><svg><use href="#rt"/></svg>Application Objects and Controls</a></li>
            <li class="l1"><a href="#"><svg><use href="#rt"/></svg>Testing Approaches</a></li>
            <li class="l1"><a href="#"><svg><use href="#rt"/></svg>Working With TestComplete</a></li>
            <li class="l1"><a href="#"><svg><use href="#dn"/></svg>Reference</a></li>
            <li class="l2"><a href="#"><svg><use href="#rt"/></svg>Test Objects</a></li>
            <li class="l2"><a href="#"><svg><use href="#rt"/></svg>Scripting Objects</a></li>
            <li class="l2"><a href="#"><svg><use href="#rt"/></svg>Project and Project Item Objects</a></li>
            <li class="l2"><a href="#"><svg><use href="#rt"/></svg>TestComplete Events</a></li>
            <li class="l2"><a href="#"><svg><use href="#rt"/></svg>Language Reference</a></li>
            <li class="l2"><a href="#"><svg><use href="#rt"/></svg>User Form Components</a></li>
            <li class="l2"><a href="#"><svg><use href="#rt"/></svg>User Interface</a></li>
            <li class="l2"><a href="#"><svg><use href="#rt"/></svg>Options</a></li>
            <li class="l2"><a href="#"><svg><use href="#rt"/></svg>APIs</a></li>
            <li class="l2"><a href="#"><svg><use href="#dn"/></svg>Miscellaneous</a></li>
            <li class="l3 cur"><a href="#"><i></i>Regular Expressions Syntax</a></li>
            <li class="l3"><a href="#"><i></i>Using Wildcards</a></li>
            <li class="l2 leaf"><a href="#"><i></i>TestComplete Service</a></li>
            <li class="l2"><a href="#"><svg><use href="#rt"/></svg>Common Dialogs</a></li>
            <li class="l2"><a href="#"><svg><use href="#rt"/></svg>Common Messages</a></li>
          </ul>
          <div class="tbar"><i class="tri u"></i><i class="tknob"></i></div>
        </nav>
        <article class="docs">
          <table class="t1"><tr><td></td><td></td><td><div class="strip"></div><code>)</code><p>If you want to place a whitespace or # characters in the pattern, then you have to prefix them with / or encode them using hex notations (<b>\xNN</b>).</p></td></tr></table>
          <p class="p1">You can specify the modifier in the expression using the <b>(?<i>key</i>)</b> or <b>(?-<i>key</i>)</b> syntax (where <i>key</i> stands for the modifier key and minus sign specifies the disabled state for the corresponding modifier). If you try to specify unsupported modifier keys an error occurs. The modifiers can be applied to the whole expression or only to a sub-expression. For example:</p>
          <table class="t2">
            <tr><td>(?i)Las Vegas</td><td>matches <s>Las vegas</s> and <s>Las Vegas</s></td></tr>
            <tr><td>(?i)Las (?-i)Vegas</td><td>matches <s>Las Vegas</s> but not <s>Las vegas</s></td></tr>
            <tr><td>(?i)(Las )?Vegas</td><td>matches <s>Las vegas</s> and <s>las vegas</s></td></tr>
            <tr><td>((?i)Las )?Vegas</td><td>matches <s>las Vegas</s>, but not <s>las vegas</s></td></tr>
          </table>
          <h2>Example</h2>
          <p>The examples below demonstrate how you can use regular expressions to find a specific control or its child and to perform a click on the specified item.</p>
          <div class="sample">
            <div class="ltabs"><a href="#">JavaScript, JScript</a><a href="#" class="on">Python</a><a href="#">VBScript</a><a href="#">DelphiScript</a><a href="#" class="last">C++Script, C#Script</a><span class="fill"></span><button class="copy">Copy Code</button></div>
<pre><u>def</u> main():
  WshShell.Run("notepad.exe", SW_NORMAL);
  notepad = Sys.Process("notepad");

  <i># Get Notepad's main window by using a regular expression</i>
  window = notepad.Find("WndCaption", <q>"regexp:.* Notepad"</q>);

  window.MainMenu.Click("Format|Font...");
  dialog = notepad.Find("WndCaption", "Font");

  <i># Specify words that must be in the specified property</i>
  <i># of the desired object by using a regular expression</i>
  control = dialog.FindChild("wItemList", <q>"regexp:.*Western.*Arabic.*"</q>, 2);

  <i># Specify the item to be clicked using a regular expression</i>
  control.ClickItem(<q>"regexp:.*European$"</q>);</pre>
          </div>
        </article>
        <aside class="helpful">
          <h4>Is this page helpful?</h4>
          <div class="yn"><button><svg><use href="#thumb"/></svg>Yes</button><button class="no"><svg><use href="#thumb"/></svg>No</button></div>
          <h4>Didn't find an answer?</h4>
          <a href="#"><svg><use href="#cont"/></svg>Ask the community</a>
        </aside>
      </div>
    </div>
    <div class="pbar"><i class="tri u"></i><i class="pk"></i><i class="tri d"></i></div>
  </div>
  <div class="taskbar">
    <div class="wx"><svg><use href="#weather"/></svg><div><b>18°C</b><span>Mostly cloudy</span></div></div>
    <button class="start"><svg><use href="#win"/></svg></button>
    <label class="tsearch"><svg><use href="#lens2"/></svg><input placeholder="Search"><span class="pill"><svg><use href="#bear"/></svg>SMARTBEAR</span></label>
    <div class="tapps"><button><svg><use href="#tview"/></svg></button><button><svg><use href="#chat"/></svg></button><button><svg><use href="#word"/></svg></button><button class="act"><svg><use href="#outlook"/></svg></button><button><svg><use href="#files"/></svg></button><button><svg><use href="#excel"/></svg></button><button class="run"><svg><use href="#slack"/></svg><i class="badge">1</i></button><button><svg><use href="#m365"/></svg></button><button><svg><use href="#ff"/></svg></button><button><svg><use href="#pc"/></svg></button><button><svg><use href="#gcp"/></svg></button><button class="run"><svg><use href="#chrome"/></svg></button><button class="run"><svg><use href="#teamsf"/></svg><i class="badge">1</i></button><button class="run"><svg><use href="#tc"/></svg></button></div>
    <div class="tray only"><time>11:07 AM<br>30/01/2024</time></div>
  </div>
</section>
</div>
</body>
</html>
```

FILE: styles.css
```css
:root {
  --ui: Roboto, "Open Sans", sans-serif;
  --doc: "Open Sans", "Noto Sans", sans-serif;
  --green: #00fc38;
}
* { box-sizing: border-box; margin: 0; padding: 0; }
body { font: 9px/12px var(--ui); color: #222; background: #fff; overflow: hidden; }
a { color: inherit; text-decoration: none; }
button, input { font: inherit; color: inherit; background: none; border: 0; outline: 0; }
ul { list-style: none; }
svg { display: block; flex: none; width: 12px; height: 12px; }
.defs { position: absolute; width: 0; height: 0; }
.i8 { width: 8px; height: 8px; }
.i9 { width: 9px; height: 9px; }
.i14 { width: 14px; height: 14px; }
.blue { color: #1f8ad2; }
.screens { display: grid; grid-template-columns: 1fr 1fr; height: 100vh; }
.screen { display: flex; flex-direction: column; min-width: 0; min-height: 0; overflow: hidden; }
.mailscreen { border: 2px solid var(--green); background: linear-gradient(90deg, #e1e5ec, #e2e6ef 25%, #e5e7ee 45%, #e1e4ea 60%, #e3e6eb); }

.outlook { flex: 1; min-height: 0; display: grid; grid-template-columns: 40px 1fr; }
.rail { display: flex; flex-direction: column; color: #333; }
.rail .logo { height: 33px; display: grid; place-items: center; padding-right: 8px; }
.rail a { height: 35px; display: grid; place-items: center; padding-right: 8px; }
.rail svg { width: 14px; height: 13px; }
.rail a.on { color: #0f6cbd; box-shadow: inset 4px 0 0 -2px #0f6cbd; }
.omain { display: flex; flex-direction: column; min-width: 0; min-height: 0; padding-right: 4px; }
.otitle { height: 33px; display: flex; align-items: center; }
.osearch { margin-left: 176px; width: 286px; height: 25px; display: flex; align-items: center; gap: 11px; padding-left: 14px; background: #fafafb; border: 1px solid #d3d6dc; border-radius: 3px; font-size: 10px; color: #666; }
.osearch input { flex: 1; min-width: 0; }
.osearch input::placeholder, .sp::placeholder { color: #666; opacity: 1; }
.winbtns { margin-left: auto; display: flex; margin-right: -4px; }
.winbtns button { width: 35px; height: 30px; display: grid; place-items: center; color: #333; }
.face { width: 18px; height: 18px; }
.otabs { height: 23px; display: flex; align-items: stretch; font-size: 10px; line-height: 24px; padding-left: 3px; }
.otabs a { margin: 0 7px; }
.otabs .file { margin-right: 12px; }
.otabs .on { font-weight: 700; border-bottom: 2px solid #0f6cbd; margin-bottom: 1px; line-height: 24px; }
.try { margin-left: auto; display: flex; align-items: center; gap: 5px; padding-right: 3px; }
.try input { position: absolute; opacity: 0; }
.toggle { display: flex; align-items: center; gap: 4px; width: 32px; height: 15px; border: 1px solid #555; border-radius: 8px; background: #fff; font-size: 8px; line-height: 13px; padding-left: 2px; }
.toggle i { width: 11px; height: 11px; border-radius: 50%; background: #616161; }

.ribboncard { background: #fff; border: 1px solid #d8dbe0; border-radius: 5px; box-shadow: 0 1px 2px #b8bcc4; overflow: hidden; flex: none; }
.ribbon { display: grid; grid-template-columns: 78px 109px 146px 170px 47px 205px 75px 162px 95px 90px 43px 50px 43px 75px 51px 44px 57px 1fr; height: 73px; padding: 3px 0 2px; border-bottom: 1px solid #c8c8c8; }
.g { border-right: 1px solid #d4d4d4; display: flex; flex-direction: column; min-width: 0; }
.c { flex: 1; display: flex; justify-content: center; min-height: 0; }
.g h6 { font: 8px/10px var(--ui); text-align: center; white-space: nowrap; }
.g .lh { display: flex; align-items: center; padding-right: 2px; }
.lh span { flex: 1; }
.lh svg { width: 6px; height: 6px; }
.b { width: 33px; padding-top: 2px; display: block; text-align: center; white-space: nowrap; align-self: flex-start; }
.b > svg:first-child { width: 22px; height: 22px; margin: 0 auto 3px; }
.b.wide { width: 46px; }
.zoomg .b { width: 49px; }
.zoomg .b > svg:first-child { margin-bottom: 4px; }
.v { display: inline-block; width: 6px; height: 6px; margin: 0; vertical-align: 1px; }
.g:nth-child(14) .b, .g:nth-child(17) .b { width: auto; }
.s { flex: 1; display: flex; flex-direction: column; padding-left: 8px; margin-top: -1px; }
.g:nth-child(4) .s { padding-left: 5px; }
.s button { height: 19px; display: flex; align-items: center; gap: 2px; white-space: nowrap; }
.s .sp { width: 79px; }
.g:nth-child(3) .c, .g:nth-child(4) .c { justify-content: flex-start; padding: 0 5px 0 0; }
.g:nth-child(4) .c { padding-left: 5px; }
.g:nth-child(10) .s { padding-left: 6px; }
.sp { height: 15px; border: 1px solid #777; border-radius: 3px; background: #fff; padding: 0 2px; flex: none; }
.gallery { width: 190px; height: 47px; margin-top: 5px; display: grid; grid-template-columns: 89px 1fr 12px; grid-template-rows: repeat(3, 1fr); border: 1px solid #c6c6c6; border-radius: 3px; }
.gallery button { display: flex; align-items: center; gap: 3px; padding-left: 1px; white-space: nowrap; }
.gallery .sc { border-left: 1px solid #c6c6c6; border-bottom: 1px solid #c6c6c6; padding: 0 0 0 1px; }
.gallery .sc:last-child { border-bottom: 0; }
.gallery .sc svg { width: 8px; height: 8px; }
.dim { color: #b5b5b5; }
.collapse { justify-self: end; align-self: end; padding: 0 7px 2px; }
.qat { height: 25px; display: flex; align-items: center; gap: 12px; padding-left: 4px; background: #fafafa; }
.qat button { display: flex; align-items: center; gap: 3px; white-space: nowrap; }
.qat .dis { color: #b5b5b5; }
.qat .sp { width: 59px; margin: 0 -5px 0 -4px; }

.opanel { flex: 1; min-height: 0; margin-top: 4px; background: #fff; border: 1px solid #d0d3d8; border-bottom: 0; border-radius: 5px 5px 0 0; display: grid; grid-template-columns: 174px 288px 1fr; overflow: hidden; }
.folders { background: #f4f4f4; padding: 0 3px 0 2px; color: #444; min-height: 0; overflow: hidden; }
.fold { display: block; margin: 5px 2px 2px auto; }
.folders h5 { font: 10px/18px var(--ui); color: #222; display: flex; align-items: center; gap: 2px; padding-left: 4px; }
.folders h5 svg, .exp svg { width: 8px; height: 8px; }
.folders a { display: block; line-height: 18px; padding-left: 13px; }
.folders h5 + a { margin-top: 2px; }
.folders .exp { display: flex; align-items: center; padding-left: 5px; }
.folders hr { border: 0; border-top: 1px solid #cfcfcf; margin: 5px 0 9px; }
.folders .acct { margin-bottom: -1px; }
.folders .acct + a { margin: 0; }
.folders .on { background: #e0e0e0; font-weight: 700; color: #222; margin: 0; }
.folders .groups { margin-top: 4px; font-weight: 500; }
.folders .groups + a { margin: 0; }
.folders .sub { padding-left: 18px; }

.msgs { border-right: 1px solid #d4d4d4; display: flex; flex-direction: column; min-height: 0; }
.mtabs { height: 35px; padding-left: 21px; display: flex; align-items: flex-end; gap: 12px; font-size: 11px; line-height: 24px; }
.mtabs .on { color: #0f6cbd; border-bottom: 1px solid #0f6cbd; line-height: 23px; }
.mtabs .by { margin-left: auto; display: flex; align-items: center; gap: 3px; font-size: 9px; line-height: 22px; }
.mtabs .asc { padding: 0 26px 6px 0; }
.mtabs .asc svg { width: 6px; height: 10px; }
.mlist { flex: 1; min-height: 0; display: grid; grid-template-columns: 1fr 13px; column-gap: 4px; padding-right: 3px; }
.mscroll { overflow: hidden; padding-left: 2px; min-width: 0; }
.mlist h5 { height: 15px; background: #efefef; border: solid #dadada; border-width: 1px 0; font: 700 8px/14px var(--ui); display: flex; align-items: center; padding-left: 6px; gap: 6px; color: #444; }
.mlist h5 svg { width: 7px; height: 7px; }
.mlist li { padding: 9px 17px 6px 20px; border-bottom: 1px solid #dcdcdc; height: 54px; font-size: 8px; }
.mlist li:nth-child(even) { height: 53px; }
.mlist li.sel { background: #cde6f7; border: 1px dotted #222; padding: 8px 16px 5px 19px; }
.mlist b { display: block; font: 10px/14px var(--ui); }
.mlist p { display: flex; justify-content: space-between; white-space: nowrap; }
.mlist em { display: block; font-style: normal; color: #666; white-space: nowrap; }
.vbar { background: #f4f4f4; border-radius: 6px; display: flex; flex-direction: column; align-items: center; padding: 5px 0; }
.tri { width: 0; height: 0; border: 3px solid transparent; }
.tri.u { border-bottom: 5px solid #6e6e6e; border-top: 0; }
.tri.d { border-top: 5px solid #6e6e6e; border-bottom: 0; margin-top: auto; }
.tri.l { border-right: 5px solid #6e6e6e; border-left: 0; }
.tri.r { border-left: 5px solid #6e6e6e; border-right: 0; }
.vbar .knob { width: 6px; height: 13px; border-radius: 3px; background: #6e6e6e; margin-top: 4px; }

.reading { min-width: 0; display: flex; flex-direction: column; padding: 15px 16px 1px 3px; }
.reading h1 { font: 13px/22px var(--ui); color: #111; padding-left: 13px; }
.head { display: flex; gap: 8px; padding-left: 13px; padding-right: 4px; }
.ava { width: 36px; height: 36px; border-radius: 50%; background: #ca5010; color: #fff; font-size: 13px; line-height: 36px; text-align: center; margin-top: 7px; position: relative; flex: none; }
.ava i { position: absolute; right: -1px; bottom: -1px; width: 10px; height: 10px; border-radius: 50%; background: #fff; border: 1px solid #a8c4d0; }
.who { flex: 1; min-width: 0; color: #444; }
.top { display: flex; justify-content: space-between; height: 26px; }
.from { font: 10px/15px var(--doc); align-self: flex-end; }
.to { display: flex; gap: 7px; line-height: 12px; }
.names { flex: 1; min-width: 0; font: 8px/12px var(--doc); }
.names div { display: flex; gap: 4px; }
.names span { display: flex; align-items: center; gap: 3px; white-space: nowrap; }
.names span::before { content: ""; width: 7px; height: 7px; border: 1px solid #a8c8d4; border-radius: 50%; }
.names .me::before { display: none; }
.names .me svg { width: 8px; height: 8px; }
.to time { color: #666; white-space: nowrap; }
.row { display: flex; gap: 6px; }
.seg { display: flex; border: 1px solid #b8b4b0; border-radius: 3px; height: 24px; }
.seg button { display: flex; align-items: center; gap: 6px; padding: 0 8px; }
.seg button:first-child { padding: 0 4px; }
.seg button + button { border-left: 1px solid #b8b4b0; }
.sq { width: 24px; height: 24px; border: 1px solid #b8b4b0; border-radius: 3px; display: grid; place-items: center; font-size: 7px; }
.seg svg, .sq svg { width: 13px; height: 13px; }
.infobar { font: 8px/12px var(--ui); padding-left: 13px; margin-top: 2px; display: flex; gap: 3px; align-items: center; color: #444; }
.body { font: 7px/10px "Liberation Sans", Arial, sans-serif; color: #000; padding: 15px 4px 0 7px; flex: 1; min-height: 0; }
.warn { display: inline-flex; align-items: center; gap: 3px; margin-top: 13px; border: 1px solid #add8e6; background: #ffffe0; padding: 2px 3px 2px 2px; height: 30px; }
.broken { width: 24px; height: 24px; border: 1px solid #ddd; border-top-color: #888; border-left-color: #888; display: flex; gap: 5px; padding: 3px 0 0 3px; overflow: hidden; }
.broken svg { width: 8px; height: 10px; }
.broken small { font-size: 6px; line-height: 8px; color: #444; }
.body table { border-collapse: collapse; margin-top: 10px; }
.body th { text-align: right; width: 57px; height: 12px; padding: 0 9px 0 0; white-space: nowrap; }
.body th, .body td { vertical-align: middle; }
.body td a { color: #00f; text-decoration: underline; }
.desc span { display: inline-block; border: 1px solid #add8e6; padding: 1px 2px; margin-top: 1px; white-space: nowrap; }
.body hr { border: 0; border-top: 1px solid #999; border-bottom: 1px solid #e4e4e4; margin: 27px 0 17px; }
.auto { font-style: italic; color: #777; }
.hbar { height: 13px; border-radius: 6px; background: #f4f4f4; display: flex; align-items: center; gap: 5px; padding: 0 2px 0 4px; }
.hbar .knob { flex: 1; height: 7px; border-radius: 3px; background: #6e6e6e; }

.status { height: 15px; flex: none; background: #f4f4f4; display: flex; align-items: stretch; font: 8px/15px Lato, sans-serif; padding: 0 5px 0 7px; color: #333; }
.status .cnt { margin-right: auto; }
.status span + span { margin-left: 14px; }
.status button { width: 30px; display: grid; place-items: center; }
.status button.on { background: #dcdcdc; margin-left: 13px; }
.zoom { display: flex; align-items: center; gap: 3px; padding: 0 8px 0 6px; }
.zoom input { width: 74px; height: 9px; appearance: none; background: linear-gradient(#666, #666) center / 100% 1px no-repeat; }
.zoom input::-webkit-slider-thumb { appearance: none; width: 3px; height: 9px; background: #555; }

.taskbar { height: 34px; flex: none; display: flex; align-items: center; color: #fff; background: linear-gradient(90deg, #1b212b 0, #1b212b 13%, #10274f 16%, #101b6b 23%, #111f60 28%, #122b3d 31%, #101c60 37%, #10254a 42%, #131a52 46%, #231e26 51%, #141c50 59%, #19163a 66%, #0f2750 74%, #231e26 83%, #10234c 88%, #1a212c 95%); border-top: 1px solid #3b4250; line-height: 12px; }
.webscreen .taskbar { height: 36px; }
.wx { display: flex; align-items: center; gap: 6px; width: 686px; padding-left: 12px; }
.wx > svg { width: 18px; height: 15px; }
.wx b, .wx span { display: block; font-weight: 400; }
.wx span { color: #c5c8cf; }
.start { margin-left: 14px; }
.webscreen .wx { padding-left: 14px; width: 688px; }
.start svg { width: 18px; height: 18px; }
.tsearch { margin-left: 10px; width: 164px; height: 24px; border-radius: 12px; border: 1px solid #555d8a; background: #ffffff26; display: flex; align-items: center; gap: 8px; padding: 0 2px 0 9px; font-size: 10px; }
.tsearch > svg { width: 11px; height: 11px; }
.tsearch input { flex: 1; min-width: 0; }
.tsearch input::placeholder { color: #c5c8dc; opacity: 1; }
.pill { width: 39px; height: 20px; border-radius: 10px; background: #052538; display: flex; align-items: center; justify-content: center; gap: 1px; font: 700 4px/6px Roboto, sans-serif; }
.pill svg { width: 8px; height: 5px; }
.tapps { display: flex; justify-content: space-between; width: 454px; margin-left: 3px; }
.tapps button { width: 30px; height: 30px; display: grid; place-items: center; position: relative; border-radius: 3px; }
.tapps svg { width: 16px; height: 16px; }
.act { background: #ffffff1c; }
.act::after, .run::after { content: ""; position: absolute; bottom: 0; left: 13px; width: 4px; height: 2px; border-radius: 1px; background: #8e929c; }
.act::after { left: 9px; width: 12px; background: #4cc2ff; }
.badge { position: absolute; top: 0; right: 4px; width: 9px; height: 9px; border-radius: 50%; background: #c4314b; font: 7px/9px var(--ui); text-align: center; }
.tray { margin-left: auto; display: flex; align-items: center; padding-right: 13px; text-align: center; gap: 5px; }
.tray .mic { margin: 0 13px 0 12px; height: 16px; }
.tray .lang { margin-right: 11px; }
.tray time { text-align: right; margin-left: 9px; }
.tray .nb { height: 14px; }
.tray.only { padding-right: 14px; }

.tabstrip { height: 30px; flex: none; background: #a6aab8; display: flex; align-items: center; color: #333; font-size: 8px; }
.tsb { width: 21px; height: 20px; margin-left: 5px; border-radius: 7px; background: #d9dae0; display: grid; place-items: center; }
.tabs { flex: 1; display: flex; align-self: stretch; padding-top: 4px; margin-left: 1px; }
.tabs a { flex: 1; min-width: 0; display: flex; align-items: center; gap: 6px; padding: 0 9px; margin-bottom: 4px; color: #44474f; position: relative; }
.tabs a::after { content: ""; position: absolute; right: 0; top: 5px; height: 12px; width: 1px; background: #dfe0e6; }
.tabs a.pre::after, .tabs a.on::after { display: none; }
.tabs a span { flex: 1; overflow: hidden; white-space: nowrap; -webkit-mask-image: linear-gradient(90deg, #000 80%, transparent); }
.tabs a.on { background: #d9dae0; border-radius: 6px 6px 0 0; margin: 0 0 0 3px; padding: 0 9px 4px 7px; color: #222; }
.tabs .cl { width: 7px; height: 7px; color: #333; }
.cwin { display: flex; width: 166px; align-items: center; color: #555; }
.cwin button { width: 34px; display: grid; place-items: center; }
.cwin .plus { width: 24px; margin-right: auto; font-size: 16px; font-weight: 300; }
.navbar { height: 34px; flex: none; background: #d9dae0; display: flex; align-items: center; padding-left: 10px; padding-right: 11px; gap: 14px; }
.navbar button { width: 13px; display: grid; place-items: center; }
.navbar .fwd { color: #8a8d94; }
.url { flex: 1; height: 25px; border-radius: 13px; background: #f5f6f9; display: flex; align-items: center; padding: 0 11px 0 4px; margin-left: -2px; }
.site { width: 18px; height: 18px; border-radius: 50%; background: #dcdde3; display: grid; place-items: center; margin-right: 6px; }
.url a { flex: 1; font-size: 10px; color: #666a70; }
.url b { font-weight: 400; color: #1c1d20; }
.navbar .sep { width: 1px; height: 12px; background: #a6aab8; margin-right: -1px; }
.navbar .me { width: 15px; height: 15px; }
.marks { height: 26px; flex: none; background: #d9dae0; display: flex; align-items: center; font-size: 8px; padding: 0 20px 4px 9px; color: #222; }
.mk { display: flex; flex: 1; justify-content: space-between; margin-right: 136px; }
.mk a { display: flex; align-items: center; gap: 4px; white-space: nowrap; }
.rr { font-size: 13px; }

.page { flex: 1; min-height: 0; display: grid; grid-template-columns: 1fr 13px; font-family: var(--doc); color: #3d4044; }
.site-in { display: flex; flex-direction: column; min-height: 0; min-width: 0; }
.sb { height: 48px; flex: none; background: #183748; color: #fff; display: flex; align-items: center; padding: 0 31px; }
.bear { width: 38px; height: 21px; }
.wm { font: 500 20px/24px Roboto, sans-serif; margin: 2px 0 0 6px; }
.sup { font-size: 19px; line-height: 30px; border-left: 2px solid #e8731b; margin-left: 15px; padding-left: 12px; }
.sb .right { margin-left: auto; display: flex; gap: 29px; align-items: center; margin-right: 1px; }
.sl { width: 14px; height: 14px; }
.g9 { width: 18px; height: 18px; }
.banner { height: 49px; flex: none; background: #f9fafc; border-bottom: 1px solid #c8ccd0; display: flex; align-items: center; justify-content: center; gap: 8px; font-size: 12px; color: #2380b3; }
.new { background: #ff8a2f; color: #fff; line-height: 17px; padding: 0 4px; border-radius: 3px; font-size: 10px; }
.cols { flex: 1; min-height: 0; display: grid; grid-template-columns: 63px 260px 590px 1fr; overflow: hidden; }
.irail { background: linear-gradient(90deg, #f6f9fb, #f0f3f6); border-right: 1px solid #e0e3e6; display: flex; flex-direction: column; align-items: center; min-height: 0; color: #333; font-size: 0; }
.irail > .tc { width: 22px; height: 22px; margin: 8px 0 12px; }
.irail a { width: 47px; height: 31px; display: grid; place-items: center; position: relative; flex: none; }
.irail a.on { height: 27px; background: #fff; border: 1px solid #c9ccd0; border-radius: 3px; margin-bottom: 2px; }
.irail a svg { width: 18px; height: 14px; }
.irail a .dc { height: 15px; width: 13px; }
.irail a .ne { position: absolute; right: 1px; top: 2px; width: 6px; height: 6px; }
.agent { margin-top: auto; height: 35px; align-self: stretch; border-top: 1px solid #cfd3d6; display: grid; justify-items: center; padding-top: 17px; overflow: hidden; }
.agent svg { width: 18px; height: 18px; }
.tree { background: #f4f7f7; display: grid; grid-template-columns: 1fr 11px; min-height: 0; overflow: hidden; font-size: 10px; color: #2d4452; }
.tree ul { padding-top: 1px; overflow: hidden; min-height: 0; }
.tree li { height: 23px; line-height: 23px; white-space: nowrap; }
.tree a { display: flex; align-items: center; gap: 5px; }
.tree svg { width: 8px; height: 8px; color: #555; }
.tree i { width: 4px; height: 4px; border-radius: 50%; background: currentColor; }
.l0 { padding-left: 8px; }
.l1 { padding-left: 21px; }
.l2 { padding-left: 36px; }
.l3 { padding-left: 52px; }
.leaf { padding-left: 37px; }
.cur { color: #ff730b; }
.tbar { background: #f1f1f1; display: flex; flex-direction: column; align-items: center; padding-top: 5px; }
.tbar .tri { border-bottom-color: #999; }
.tknob { flex: 1; width: 11px; background: #c1c1c1; margin-top: 3px; }

.docs { padding-left: 15px; font-size: 11px; line-height: 15px; min-width: 0; overflow: hidden; }
.t1 { margin-left: 12px; border-collapse: collapse; height: 68px; width: 540px; }
.t1 td { border: 1px solid #c8c8c8; border-top: 0; vertical-align: top; padding: 0 0 0 4px; }
.t1 td:first-child { width: 59px; }
.t1 td:nth-child(2) { width: 56px; }
.strip { width: 216px; height: 2px; background: #f4f4f4; }
.t1 code { display: block; width: 21px; margin-top: 2px; background: #f7f7f7; color: #800080; text-align: right; padding-right: 4px; border-radius: 0 0 3px 3px; font-family: var(--doc); }
.t1 p { margin-top: 9px; white-space: normal; }
.p1 { margin-top: 10px; }
.t2 { margin: 8px 0 0 12px; border-collapse: collapse; }
.t2 td { border: 1px solid #c8c8c8; height: 22px; padding: 0 4px; white-space: nowrap; }
.t2 td:first-child { color: #800080; }
.t2 s { text-decoration: none; color: #008080; }
.docs h2 { font: 17px/24px var(--doc); margin: 33px 0 8px; }
.sample { margin: 14px 0 0 25px; width: 483px; }
.ltabs { display: flex; height: 19px; color: #2a62c8; font-size: 9px; line-height: 18px; align-items: stretch; font-family: var(--doc); }
.ltabs a { border: 1px solid #c8c8c8; border-right: 0; padding: 0 13px; white-space: nowrap; }
.ltabs a:first-child { border-radius: 4px 0 0 0; }
.ltabs .on { border-bottom-color: transparent; }
.ltabs .last { border-right: 1px solid #c8c8c8; border-radius: 0 4px 0 0; }
.fill { flex: 1; border-bottom: 1px solid #c8c8c8; }
.copy { font-size: 8px; line-height: 10px; align-self: flex-end; background: #fff; padding: 0 7px 0 4px; margin-bottom: -5px; }
.sample pre { border: 1px solid #c8c8c8; border-top: 0; padding: 13px 11px 6px; font: 9px/13px "Liberation Mono", monospace; color: #333; }
pre u { text-decoration: none; color: #1a3fc4; }
pre i { color: #7a7a7a; }
pre q { quotes: none; color: #00f; }
pre q::before, pre q::after { content: none; }
.helpful { padding: 40px 0 0 21px; font-size: 11px; }
.helpful h4 { font: 12px/16px var(--doc); color: #333; }
.yn { display: flex; gap: 7px; margin: 12px 0 40px; color: #888; }
.yn button { width: 56px; height: 25px; border: 1px solid #b8b8b8; border-radius: 3px; display: flex; align-items: center; justify-content: center; gap: 6px; }
.yn svg { width: 14px; height: 14px; }
.no svg { rotate: 180deg; }
.helpful > a { display: flex; align-items: center; gap: 2px; color: #2387b8; margin: 14px 0 0 10px; }
.pbar { background: #f1f1f1; display: flex; flex-direction: column; align-items: center; padding: 5px 0; }
.pk { width: 11px; height: 44px; background: #c1c1c1; margin-top: 500px; }
```
